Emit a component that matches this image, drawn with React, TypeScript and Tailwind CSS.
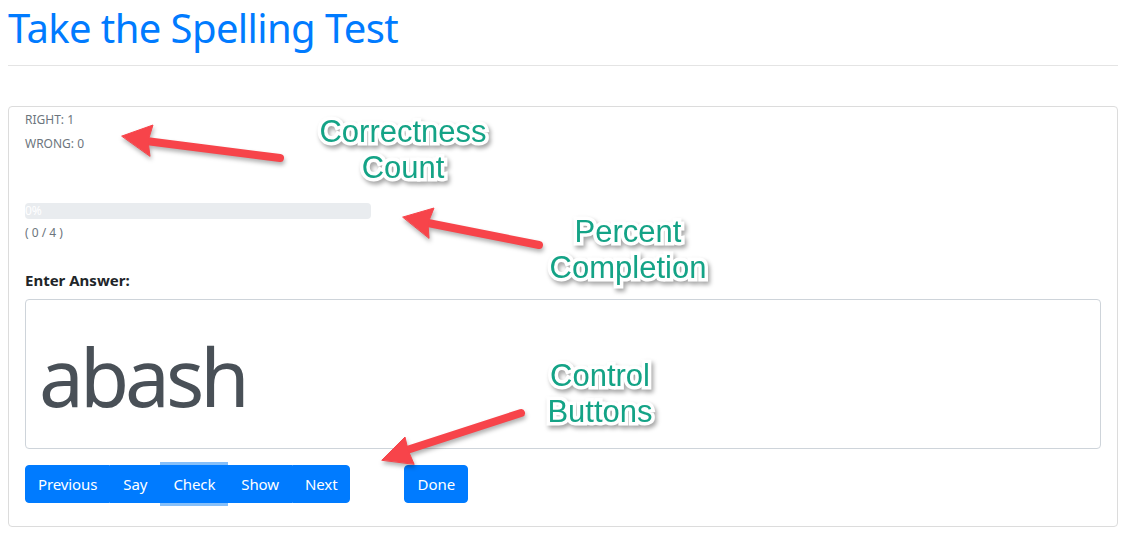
const buttons = ["Previous", "Say", "Check", "Show", "Next"];

function Arrows() {
  return (
    <svg
      className="pointer-events-none absolute left-0 top-0 [filter:drop-shadow(1px_3px_2px_rgba(0,0,0,0.3))]"
      width="1138"
      height="541"
      viewBox="0 0 1138 541"
    >
      <g fill="#f7444a" stroke="#f7444a" strokeLinecap="round" strokeLinejoin="round">
        <line x1="146" y1="137" x2="280" y2="154" strokeWidth="8" />
        <polygon points="122,132 153,121 148,137 150,152" strokeWidth="1" />
        <line x1="428" y1="219" x2="539" y2="241" strokeWidth="8" />
        <polygon points="403,213 434,204 428,219 429,234" strokeWidth="1" />
        <line x1="407" y1="446" x2="521" y2="409" strokeWidth="8" />
        <polygon points="382,456 405,433 408,446 414,460" strokeWidth="1" />
      </g>
    </svg>
  );
}

function Note({ className, lines }: { className: string; lines: string[] }) {
  return (
    <div
      className={
        "pointer-events-none absolute w-[220px] text-center font-['Liberation_Sans',Arial,sans-serif] text-[31px] leading-[36px] text-[#14a386] [-webkit-text-stroke:7px_white] [paint-order:stroke_fill] [filter:drop-shadow(2px_3px_2px_rgba(0,0,0,0.35))] " +
        className
      }
    >
      {lines.map((l) => (
        <div key={l}>{l}</div>
      ))}
    </div>
  );
}

export default function App() {
  return (
    <div className="relative min-h-[541px] bg-white font-['Noto_Sans','Open_Sans',sans-serif] text-[#212529]">
      <div className="w-[1118px] pl-2">
        <h1 className="mt-[4px] text-[40px] font-normal leading-[48px] tracking-[-0.6px] text-[#007bff]">
          Take the Spelling Test
        </h1>
        <hr className="mt-[13px] border-[#e4e4e4]" />

        <div className="mt-[40px] rounded border border-[#dcdcdc] px-4 pb-[23px] pt-[1px]">
          <div className="text-[12px] leading-6 text-[#6c757d]">
            <div>RIGHT: 1</div>
            <div>WRONG: 0</div>
          </div>

          <div className="mt-[47px] flex h-4 w-[346px] items-center overflow-hidden rounded bg-[#e9ecef] text-[12px] leading-4 text-white">
            0%
          </div>
          <div className="mt-[2px] text-[12px] leading-6 text-[#6c757d]">( 0 / 4 )</div>

          <div className="mt-[23px] text-[15px] font-bold leading-6">Enter Answer:</div>

          <div className="mt-[7px] h-[150px] rounded border border-[#ced4da] pl-[13px] pt-[36px] text-[80px] leading-none tracking-[-4px] text-[#495057]">
            abash
          </div>

          <div className="mt-4 flex items-center">
            <div className="flex">
              {buttons.map((b, i) => (
                <button
                  key={b}
                  className={
                    "border border-[#007bff] bg-[#007bff] px-3 py-[6px] text-[15px] leading-6 tracking-[-0.1px] text-white " +
                    (i === 0 ? "rounded-l " : "") +
                    (i === buttons.length - 1 ? "rounded-r " : "") +
                    (b === "Check" ? "relative z-10 shadow-[0_-3px_0_0_#86bff9,0_3px_0_0_#86bff9]" : "")
                  }
                >
                  {b}
                </button>
              ))}
            </div>
            <button className="ml-[54px] rounded border border-[#007bff] bg-[#007bff] px-3 py-[6px] text-[15px] leading-6 text-white">
              Done
            </button>
          </div>
        </div>
      </div>

      <Arrows />
      <Note className="left-[293px] top-[110px]" lines={["Correctness", "Count"]} />
      <Note className="left-[518px] top-[210px]" lines={["Percent", "Completion"]} />
      <Note className="left-[490px] top-[354px]" lines={["Control", "Buttons"]} />
    </div>
  );
}
